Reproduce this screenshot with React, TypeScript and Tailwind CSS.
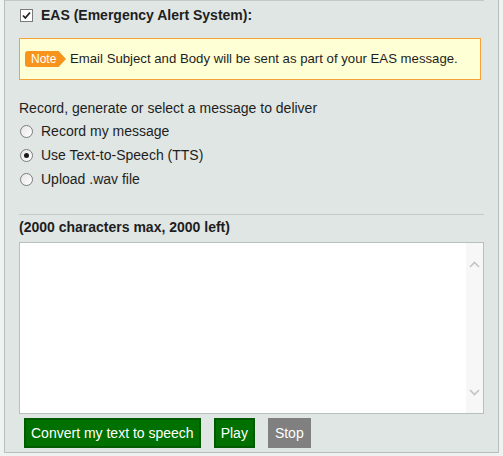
const font = { fontFamily: '"Liberation Sans", Arial, sans-serif' };

const options = [
  { id: 'rec', label: 'Record my message', checked: false },
  { id: 'tts', label: 'Use Text-to-Speech (TTS)', checked: true },
  { id: 'wav', label: 'Upload .wav file', checked: false },
];

const Chevron = ({ down }: { down?: boolean }) => (
  <svg width="11" height="7" viewBox="0 0 11 7" className="block">
    <polyline
      points={down ? '1,1 5.5,5.5 10,1' : '1,6 5.5,1.5 10,6'}
      fill="none"
      stroke="#c3c3c3"
      strokeWidth="1.6"
    />
  </svg>
);

// classic grey checkbox
const CheckBox = () => (
  <span className="w-[13px] h-[13px] border border-[#7a7a7a] bg-white flex items-center justify-center">
    <svg width="11" height="11" viewBox="0 0 11 11">
      <polyline points="2,5.5 4.3,8 9,2.5" fill="none" stroke="#222" strokeWidth="1.8" />
    </svg>
  </span>
);

const Radio = ({ on }: { on: boolean }) => (
  <span className="w-[13px] h-[13px] rounded-full border border-[#7c7c7c] bg-gradient-to-br from-[#e6e6e6] to-white flex items-center justify-center">
    {on && <span className="w-[5px] h-[5px] rounded-full bg-[#1a1a1a]" />}
  </span>
);

const App = () => (
  <div className="w-[503px] h-[456px] bg-[#eef2f1] text-[#1e1e1e]" style={font}>
    <div className="ml-[4px] w-[495px] h-[453px] border-l border-r border-b border-[#b7c0be] bg-[#dfe6e4]">
      <div className="h-px bg-[#c2cac8] mr-[14px]" />

      <div className="pl-[14px] pr-[14px]">
        {/* EAS title */}
        <div className="mt-[8px] flex items-center h-[13px] gap-[8px] pl-[1px]">
          <CheckBox />
          <span className="text-[14px] leading-[13px] font-bold">EAS (Emergency Alert System):</span>
        </div>

        {/* Note */}
        <div className="mt-[16px] mr-[3px] h-[42px] flex items-center border border-[#f6a13a] bg-[#ffffd6] pl-[5px]">
          <span className="w-[41px] h-[16px] flex items-center pl-[6px] bg-[#f7941d] rounded-l-[3px] text-white text-[12px] leading-none [clip-path:polygon(0_0,82%_0,100%_50%,82%_100%,0_100%)]">
            Note
          </span>
          <span className="ml-[4px] text-[13.2px]">
            Email Subject and Body will be sent as part of your EAS message.
          </span>
        </div>

        {/* message source */}
        <p className="mt-[20px] text-[14px] leading-[16px]">Record, generate or select a message to deliver</p>
        <div className="mt-[3px]">
          {options.map((o) => (
            <div key={o.id} className="flex items-center h-[24px] gap-[8px] pl-[1px]">
              <Radio on={o.checked} />
              <span className="text-[14px] leading-[24px]">{o.label}</span>
            </div>
          ))}
        </div>

        <div className="mt-[23px] h-px bg-[#c2cac8]" />

        <p className="mt-[4px] text-[14px] leading-[16px] font-bold">(2000 characters max, 2000 left)</p>

        {/* text box */}
        <div className="mt-[7px] h-[172px] flex border border-[#b8c0be] bg-white">
          <textarea className="flex-1 resize-none outline-none p-[2px] text-[14px] overflow-hidden" />
          <div className="w-[17px] bg-[#f7f7f7] flex flex-col items-center justify-between pt-[18px] pb-[17px]">
            <Chevron />
            <Chevron down />
          </div>
        </div>

        {/* actions */}
        <div className="mt-[4px] ml-[5px] flex gap-[13px]">
          <button className="h-[30px] px-[5px] border-2 border-[#005a00] bg-[#007000] text-white text-[14px]">
            Convert my text to speech
          </button>
          <button className="h-[30px] px-[5px] border-2 border-[#005a00] bg-[#007000] text-white text-[14px]">
            Play
          </button>
          <button className="h-[30px] px-[5px] border-2 border-[#808080] bg-[#808080] text-white text-[14px]">
            Stop
          </button>
        </div>
      </div>
    </div>
  </div>
);

export default App;
